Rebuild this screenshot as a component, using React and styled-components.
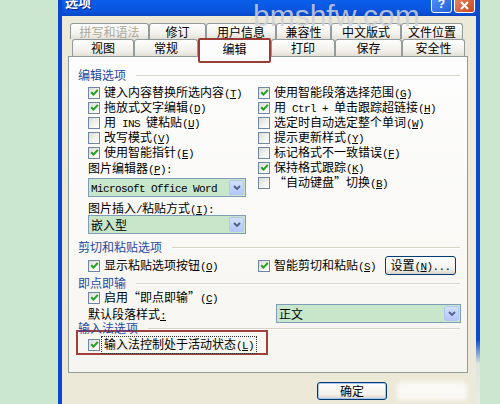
import React from 'react';
import styled, { createGlobalStyle } from 'styled-components';

const GlobalStyle = createGlobalStyle`
  html, body {
    margin: 0;
    padding: 0;
  }

  body {
    width: 500px;
    height: 404px;
    overflow: hidden;
    background: #cbe7cd;
    font-family: "Noto Sans CJK SC", sans-serif;
    font-size: 12px;
    color: #000;
  }
`;

const Screen = styled.div`
  position: relative;
  width: 500px;
  height: 404px;
  overflow: hidden;
  padding-left: 58px;
  box-sizing: border-box;
`;

const Watermark = styled.div`
  position: absolute;
  left: 253px;
  top: 1px;
  z-index: 5;
  font: 30px/30px "Liberation Sans", sans-serif;
  color: rgba(206, 208, 220, 0.85);
  pointer-events: none;
`;

const Window = styled.div`
  width: 422px;
  height: 404px;
  box-sizing: border-box;
  border-left: 4px solid #0b47cf;
  padding-right: 4px;
  background: linear-gradient(#0b47cf 0, #0b47cf 84%, #dde5de 90%, #e9ece4 100%);
  display: flex;
  flex-direction: column;
`;

const TitleBar = styled.div`
  flex: none;
  height: 16px;
  display: flex;
  align-items: flex-start;
  justify-content: space-between;
  padding: 0 1px 0 3px;
  background: linear-gradient(#0a5fea, #0a53dd 70%, #0847c4);
  overflow: hidden;
`;

const Title = styled.div`
  margin-top: -8px;
  color: #fff;
  font-weight: bold;
  font-size: 13px;
  line-height: 20px;
  text-shadow: 1px 1px #0a1e8c;
`;

const CaptionButtons = styled.div`
  display: flex;
  gap: 2px;
  margin-top: -8px;
`;

const CaptionButton = styled.div`
  width: 21px;
  height: 21px;
  box-sizing: border-box;
  border: 1px solid #fff;
  border-radius: 3px;
  background: ${({ $close }) =>
    $close
      ? 'linear-gradient(135deg, #ec8e70, #c9461f)'
      : 'linear-gradient(135deg, #5a95f7, #1f5fd9)'};
  display: flex;
  align-items: flex-end;
  justify-content: center;
  padding-bottom: 2px;
  color: #fff;
  font: bold 12px/12px "Liberation Sans", sans-serif;
`;

const Body = styled.div`
  flex: 1;
  background: #ece9d8;
  padding: 7px 0 0 6px;
  display: flex;
  flex-direction: column;
`;

const TabRow = styled.div`
  display: flex;
  align-items: flex-start;
  height: ${({ $h }) => $h}px;
  margin-left: ${({ $indent }) => $indent}px;
`;

const Tab = styled.div`
  flex: none;
  width: ${({ $w }) => $w}px;
  height: 100%;
  box-sizing: border-box;
  border: 1px solid #919b9c;
  border-bottom: none;
  border-radius: 3px 3px 0 0;
  background: linear-gradient(#fefefe, #f2f1ec 65%, #e2e0d5);
  display: flex;
  align-items: center;
  justify-content: center;
  line-height: 14px;
  color: ${({ $disabled }) => ($disabled ? '#aca899' : '#000')};
`;

const ActiveTab = styled(Tab)`
  position: relative;
  z-index: 2;
  height: 25px;
  margin-top: -1px;
  margin-bottom: -8px;
  border: 2px solid #9a3b36;
  border-radius: 2px;
  background: #fcfcfd;
  align-items: flex-start;
  padding-top: 1px;
  line-height: 15px;
`;

const Panel = styled.div`
  position: relative;
  z-index: 1;
  width: 400px;
  height: 317px;
  box-sizing: border-box;
  border: 1px solid #919b9c;
  background: linear-gradient(#fdfdfd, #f6f5f0);
  padding: 11px 7px 0 9px;
`;

const GroupHeader = styled.div`
  display: flex;
  align-items: center;
  height: 14px;
  line-height: 14px;
  margin-top: ${({ $mt }) => $mt || 0}px;
  color: #1f4aa0;
  white-space: nowrap;

  &::after {
    content: '';
    flex: 1;
    height: 1px;
    margin-left: 10px;
    background: #d5d4c6;
    box-shadow: 0 1px 0 #fff;
  }
`;

const OptionGrid = styled.div`
  display: grid;
  grid-template-columns: ${({ $cols }) => $cols || '170px 1fr'};
  align-items: ${({ $align }) => $align || 'start'};
  padding-left: 10px;
  margin-top: ${({ $mt }) => $mt || 0}px;
`;

const Column = styled.div`
  display: flex;
  flex-direction: column;
`;

const Inline = styled.div`
  display: flex;
  align-items: center;
  gap: 9px;
`;

const CheckRow = styled.div`
  display: flex;
  align-items: center;
  gap: 4px;
  height: 15px;
  line-height: 15px;
  white-space: nowrap;
`;

const Box = styled.span`
  flex: none;
  width: 12px;
  height: 12px;
  box-sizing: border-box;
  border: 1px solid #6f87a3;
  background: linear-gradient(135deg, #dcdcd4, #f4f4ef 60%, #fff);
  display: flex;
  align-items: center;
  justify-content: center;
`;

const Text = styled.span`
  white-space: nowrap;
`;

const Latin = styled.span`
  font-family: "Liberation Mono", monospace;
  font-size: 11px;
  letter-spacing: -0.6px;
  white-space: pre;
`;

const Focus = styled.span`
  margin-left: -3px;
  padding: 0 2px;
  border: 1px dotted #333;
  line-height: 13px;
  white-space: nowrap;
`;

const FieldLabel = styled.div`
  height: 15px;
  line-height: 15px;
  margin-top: ${({ $mt }) => $mt || 0}px;
  white-space: nowrap;
`;

const Combo = styled.div`
  width: ${({ $w }) => $w}px;
  height: 19px;
  box-sizing: border-box;
  margin-top: ${({ $mt }) => $mt || 0}px;
  border: 1px solid #7f9db9;
  background: #c8e6c9;
  display: flex;
  align-items: center;
  justify-content: space-between;
  padding: 0 1px 0 2px;
  line-height: 15px;
  white-space: nowrap;
`;

const ComboArrow = styled.span`
  flex: none;
  width: 15px;
  height: 15px;
  box-sizing: border-box;
  border: 1px solid #b3c6f2;
  border-radius: 2px;
  background: linear-gradient(#d3e0fd, #b3c7f6);
  display: flex;
  align-items: center;
  justify-content: center;
`;

const RedBox = styled.div`
  width: 192px;
  height: 25px;
  box-sizing: border-box;
  margin: -5px 0 0 -2px;
  border: 2px solid #a3403c;
  padding: 5px 0 0 10px;
`;

const Button = styled.button`
  width: ${({ $w }) => $w}px;
  height: ${({ $h }) => $h || 18}px;
  padding: 0;
  box-sizing: border-box;
  border: 1px solid #003c74;
  border-radius: 3px;
  background: linear-gradient(#ffffff, #f2f1ec 70%, #d8d3c6);
  box-shadow: ${({ $default }) => ($default ? 'inset 0 0 0 1px #a9c4ee' : 'none')};
  font-family: "Noto Sans CJK SC", sans-serif;
  font-size: 12px;
  line-height: 14px;
  color: #000;
  white-space: nowrap;
`;

const Footer = styled.div`
  display: flex;
  justify-content: flex-end;
  gap: 10px;
  padding: 9px 9px 0 0;
`;

const ErasedButton = styled.div`
  width: 70px;
  height: 18px;
  border-radius: 3px;
  background: rgba(255, 255, 255, 0.75);
  filter: blur(2px);
`;

const Key = ({ k }) => (
  <Latin>
    (<u>{k}</u>)
  </Latin>
);

const Check = () => (
  <svg width="9" height="9" viewBox="0 0 9 9">
    <path d="M1.2 4.2 L3.5 6.6 L7.8 1.8" stroke="#21a121" strokeWidth="2" fill="none" />
  </svg>
);

const Checkbox = ({ checked, children, focused }) => (
  <CheckRow>
    <Box>{checked && <Check />}</Box>
    {focused ? <Focus>{children}</Focus> : <Text>{children}</Text>}
  </CheckRow>
);

const Chevron = () => (
  <svg width="8" height="5" viewBox="0 0 8 5">
    <path d="M1 1 L4 4 L7 1" stroke="#4d6185" strokeWidth="1.8" fill="none" />
  </svg>
);

const Select = ({ width, mt, children }) => (
  <Combo $w={width} $mt={mt}>
    <Text>{children}</Text>
    <ComboArrow>
      <Chevron />
    </ComboArrow>
  </Combo>
);

const backTabs = [
  { label: '拼写和语法', w: 79, disabled: true },
  { label: '修订', w: 57 },
  { label: '用户信息', w: 70 },
  { label: '兼容性', w: 55 },
  { label: '中文版式', w: 70 },
  { label: '文件位置', w: 62 },
];

const frontTabs = [
  { label: '视图', w: 62 },
  { label: '常规', w: 64 },
  { label: '编辑', w: 73, active: true },
  { label: '打印', w: 64 },
  { label: '保存', w: 67 },
  { label: '安全性', w: 63 },
];

const leftOptions = [
  { checked: true, label: <>键入内容替换所选内容<Key k="T" /></> },
  { checked: true, label: <>拖放式文字编辑<Key k="D" /></> },
  { checked: false, label: <>用<Latin> INS </Latin>键粘贴<Key k="U" /></> },
  { checked: false, label: <>改写模式<Key k="V" /></> },
  { checked: true, label: <>使用智能指针<Key k="E" /></> },
];

const rightOptions = [
  { checked: true, label: <>使用智能段落选择范围<Key k="G" /></> },
  { checked: true, label: <>用<Latin> Ctrl + </Latin>单击跟踪超链接<Key k="H" /></> },
  { checked: false, label: <>选定时自动选定整个单词<Key k="W" /></> },
  { checked: false, label: <>提示更新样式<Key k="Y" /></> },
  { checked: false, label: <>标记格式不一致错误<Key k="F" /></> },
  { checked: true, label: <>保持格式跟踪<Key k="K" /></> },
  { checked: false, label: <>“自动键盘”切换<Key k="B" /></> },
];

const App = () => (
  <>
    <GlobalStyle />
    <Screen>
      <Watermark>bmshfw.com</Watermark>
      <Window>
        <TitleBar>
          <Title>选项</Title>
          <CaptionButtons>
            <CaptionButton>?</CaptionButton>
            <CaptionButton $close>
              <svg width="9" height="9" viewBox="0 0 9 9">
                <path d="M1 1 L8 8 M8 1 L1 8" stroke="#fff" strokeWidth="2" />
              </svg>
            </CaptionButton>
          </CaptionButtons>
        </TitleBar>

        <Body>
          <TabRow $h={16} $indent={2}>
            {backTabs.map(({ label, w, disabled }) => (
              <Tab key={label} $w={w} $disabled={disabled}>
                {label}
              </Tab>
            ))}
          </TabRow>
          <TabRow $h={17} $indent={4}>
            {frontTabs.map(({ label, w, active }) =>
              active ? (
                <ActiveTab key={label} $w={w}>
                  {label}
                </ActiveTab>
              ) : (
                <Tab key={label} $w={w}>
                  {label}
                </Tab>
              ),
            )}
          </TabRow>

          <Panel>
            <GroupHeader>编辑选项</GroupHeader>
            <OptionGrid $mt={3}>
              <Column>
                {leftOptions.map((o, i) => (
                  <Checkbox key={i} checked={o.checked}>
                    {o.label}
                  </Checkbox>
                ))}
                <FieldLabel>
                  图片编辑器<Key k="P" />
                  <Latin>:</Latin>
                </FieldLabel>
                <Select width={158} mt={3}>
                  <Latin>Microsoft Office Word</Latin>
                </Select>
                <FieldLabel $mt={3}>
                  图片插入<Latin>/</Latin>粘贴方式<Key k="I" />
                  <Latin>:</Latin>
                </FieldLabel>
                <Select width={158}>嵌入型</Select>
              </Column>
              <Column>
                {rightOptions.map((o, i) => (
                  <Checkbox key={i} checked={o.checked}>
                    {o.label}
                  </Checkbox>
                ))}
              </Column>
            </OptionGrid>

            <GroupHeader $mt={6}>剪切和粘贴选项</GroupHeader>
            <OptionGrid $mt={2} $align="center">
              <Checkbox checked>
                显示粘贴选项按钮<Key k="O" />
              </Checkbox>
              <Inline>
                <Checkbox checked>
                  智能剪切和粘贴<Key k="S" />
                </Checkbox>
                <Button $w={71} $h={19}>
                  设置<Latin>(<u>N</u>)...</Latin>
                </Button>
              </Inline>
            </OptionGrid>

            <GroupHeader $mt={1}>即点即输</GroupHeader>
            <OptionGrid $cols="1fr">
              <Checkbox checked>
                启用“即点即输”<Key k="C" />
              </Checkbox>
            </OptionGrid>
            <OptionGrid $cols="188px 185px" $align="center" $mt={-1}>
              <FieldLabel>
                默认段落样式
                <Latin>
                  <u>:</u>
                </Latin>
              </FieldLabel>
              <Select width={185}>正文</Select>
            </OptionGrid>

            <GroupHeader $mt={-2}>输入法选项</GroupHeader>
            <RedBox>
              <Checkbox checked focused>
                输入法控制处于活动状态<Key k="L" />
              </Checkbox>
            </RedBox>
          </Panel>

          <Footer>
            <Button $w={70} $default>
              确定
            </Button>
            <ErasedButton />
          </Footer>
        </Body>
      </Window>
    </Screen>
  </>
);

export default App;
